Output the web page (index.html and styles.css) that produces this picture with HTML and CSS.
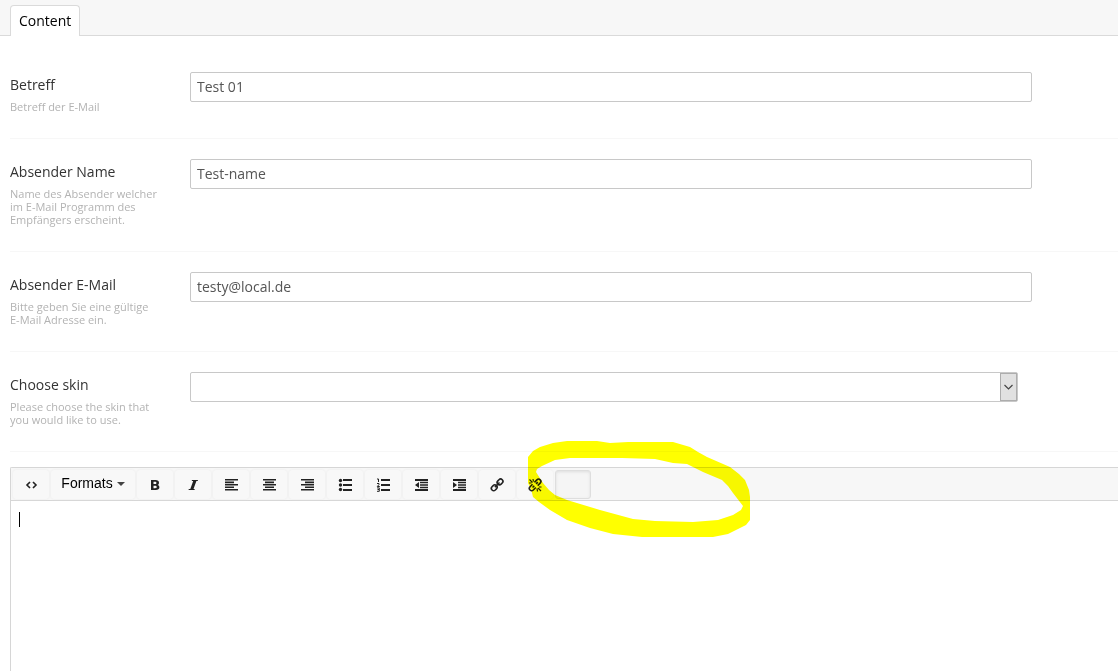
FILE: index.html
```html
<!DOCTYPE html>
<html lang="de">
<head>
    <meta charset="UTF-8">
    <meta name="viewport" content="width=device-width, initial-scale=1.0">
    <title>Content</title>
    <link rel="stylesheet" href="styles.css">
</head>
<body>
    <nav class="tabs">
        <a href="#content" class="tab active">Content</a>
    </nav>
    <form class="pane" id="content">
        <div class="row">
            <div class="control-header">
                <label for="subject">Betreff</label>
                <small>Betreff der E-Mail</small>
            </div>
            <div class="control">
                <input type="text" id="subject" value="Test 01">
            </div>
        </div>
        <div class="row">
            <div class="control-header">
                <label for="sender-name">Absender Name</label>
                <small>Name des Absender welcher im E-Mail Programm des Empfängers erscheint.</small>
            </div>
            <div class="control">
                <input type="text" id="sender-name" value="Test-name">
            </div>
        </div>
        <div class="row">
            <div class="control-header">
                <label for="sender-mail">Absender E-Mail</label>
                <small>Bitte geben Sie eine gültige E-Mail Adresse ein.</small>
            </div>
            <div class="control">
                <input type="text" id="sender-mail" value="testy@local.de">
            </div>
        </div>
        <div class="row">
            <div class="control-header">
                <label for="skin">Choose skin</label>
                <small>Please choose the skin that you would like to use.</small>
            </div>
            <div class="control">
                <div class="select">
                    <select id="skin"><option></option></select>
                    <span class="select-arrow">
                        <svg width="9" height="6" viewBox="0 0 9 6"><path d="M.5 1l4 4 4-4" fill="none" stroke="#444" stroke-width="1.2"/></svg>
                    </span>
                </div>
            </div>
        </div>

        <div class="editor">
            <div class="toolbar">
                <button type="button" aria-label="Source code">
                    <svg width="14" height="14" viewBox="0 0 14 14"><path d="M6 4L3 7l3 3M9 4l3 3-3 3" fill="none" stroke="#222" stroke-width="1.6"/></svg>
                </button>
                <button type="button" class="formats">Formats <i class="caret"></i></button>
                <button type="button" aria-label="Bold">
                    <svg width="14" height="14" viewBox="0 0 14 14"><path fill-rule="evenodd" d="M3 2h4.500c2.200 0 3.500 1 3.500 2.700 0 1.100-.6 1.900-1.500 2.200 1.200.3 1.900 1.200 1.900 2.400C11.400 11 10 12 7.800 12H3zM5.500 3.800v2.300h1.300c1.100 0 1.600-.4 1.600-1.200s-.5-1.100-1.500-1.100zM5.500 7.800v2.400h1.600c1.100 0 1.600-.4 1.600-1.200s-.6-1.200-1.700-1.200z"/></svg>
                </button>
                <button type="button" aria-label="Italic">
                    <svg width="14" height="14" viewBox="0 0 14 14"><path d="M6 2h6l-.3 1h-1.300L7.500 11h1.300l-.3 1H2.500l.3-1h1.500L7.200 3H5.700z"/></svg>
                </button>
                <button type="button" aria-label="Align left">
                    <svg width="14" height="14" viewBox="0 0 14 14"><path d="M1 1h13v1.600H1zM1 3.600h9v1.600H1zM1 6h13v1.500H1zM1 8.500h9v1.500H1zM1 11h13v1.500H1z"/></svg>
                </button>
                <button type="button" aria-label="Align center">
                    <svg width="14" height="14" viewBox="0 0 14 14"><path d="M1 1h13v1.600H1zM3 3.600h9v1.600H3zM1 6h13v1.500H1zM3 8.500h9v1.500H3zM1 11h13v1.500H1z"/></svg>
                </button>
                <button type="button" aria-label="Align right">
                    <svg width="14" height="14" viewBox="0 0 14 14"><path d="M1 1h13v1.600H1zM5 3.600h9v1.600H5zM1 6h13v1.500H1zM5 8.500h9v1.500H5zM1 11h13v1.500H1z"/></svg>
                </button>
                <button type="button" aria-label="Bullet list">
                    <svg width="14" height="14" viewBox="0 0 14 14"><circle cx="2.500" cy="2.500" r="1.700"/><circle cx="2.500" cy="7" r="1.700"/><circle cx="2.500" cy="11.500" r="1.700"/><path d="M5 1h9v2H5zM5 6h9v2H5zM5 11h9v2H5z"/></svg>
                </button>
                <button type="button" aria-label="Numbered list">
                    <svg width="14" height="14" viewBox="0 0 14 14"><path d="M5 1h9v2H5zM5 6h9v2H5zM5 11h9v2H5z"/><path d="M1 1h1.500V4M1 5.500h2v1L1.300 8.500H3.800M1 9.900h2.300v1.600H1.500M3.300 11.500V13.300H1" fill="none" stroke="#222"/></svg>
                </button>
                <button type="button" aria-label="Decrease indent">
                    <svg width="14" height="14" viewBox="0 0 14 14"><path d="M1 1h13v2H1zM6 3.700h8v1.600H6zM6 6.200h8v1.600H6zM6 8.700h8v1.600H6zM1 11h13v2H1zM5 4v6L1 7z"/></svg>
                </button>
                <button type="button" aria-label="Increase indent">
                    <svg width="14" height="14" viewBox="0 0 14 14"><path d="M1 1h13v2H1zM6 3.700h8v1.600H6zM6 6.200h8v1.600H6zM6 8.700h8v1.600H6zM1 11h13v2H1zM1 4v6l4-3z"/></svg>
                </button>
                <button type="button" aria-label="Insert link">
                    <svg width="14" height="14" viewBox="0 0 14 14"><g transform="rotate(-45 7 7)" fill="none" stroke="#222" stroke-width="1.600"><rect x="0" y="4.700" width="6.200" height="4.600" rx="2.300"/><rect x="8.200" y="4.700" width="6.200" height="4.600" rx="2.300"/><path d="M4 7h6.500"/></g></svg>
                </button>
                <button type="button" aria-label="Remove link">
                    <svg width="14" height="14" viewBox="0 0 14 14"><g fill="none" stroke="#222" stroke-width="1.600"><g transform="rotate(-45 7 7)"><path d="M5.800 4.700H2.300a2.300 2.300 0 0 0 0 4.600h3.500M8.500 4.700H12a2.300 2.300 0 0 1 0 4.600H8.500M3.500 7H6M8.500 7H11"/></g><path d="M1.500 1.500l3 3M5 1l.5 2.500M1 5h2.500M13 13l-3-3M9.500 13.500l-.5-3M13.500 9h-2.500" stroke-width="1.200"/></g></svg>
                </button>
                <button type="button" class="pressed" aria-label="Plugin"></button>
            </div>
            <div class="edit-area">
                <textarea aria-label="Editor"></textarea>
                <span class="text-cursor"></span>
            </div>
            <!-- yellow marker -->
            <svg class="marker" width="224" height="98" viewBox="0 0 224 98">
                <path fill="#ff0" fill-rule="evenodd" d="M0 17L5 11L12 7L25 3L39 1H69L82 3L100 2L145 2L162 7L170 12L179 17L202 27L211 34L217 40L221 50L222 57V80L218 85L212 88L200 94L185 97H114L85 94L62 88L39 80L22 70L11 62L5 57L3 49L0 43ZM8 32L15 43L21 50L27 55L39 60L72 70L105 79L127 81L165 82L190 80L205 75L213 70L215 66L205 53L200 46L194 40L175 32L159 24L145 23L127 19L94 18H42L27 20L14 26L9 29Z"/>
            </svg>
        </div>
    </form>
</body>
</html>
```
FILE: styles.css
```css
* {
    box-sizing: border-box;
}
body {
    margin: 0;
    min-height: 100vh;
    display: flex;
    flex-direction: column;
    font-family: 'Open Sans', 'Noto Sans', sans-serif;
    font-size: 14px;
    line-height: 20px;
    color: #333;
    background-color: #fff;
    overflow-x: hidden;
}
.tabs {
    display: flex;
    height: 36px;
    padding: 5px 10px 0;
    background-color: #f7f7f7;
    border-bottom: 1px solid #dadada;
}
.tab {
    height: 31px;
    padding: 5px 8px;
    color: #000;
    text-decoration: none;
    border: 1px solid #dadada;
    border-bottom: 0;
    border-radius: 4px 4px 0 0;
}
.tab.active {
    background-color: #fff;
}
.pane {
    flex: 1;
    display: flex;
    flex-direction: column;
    padding: 16px 0 0 10px;
}
.row {
    display: flex;
    padding: 20px 0 25px;
    border-bottom: 1px solid #f7f7f7;
}
.control-header {
    width: 180px;
    padding: 3px 30px 0 0;
}
.control-header label {
    display: block;
    margin-bottom: 5px;
}
.control-header small {
    display: block;
    font-size: 11px;
    line-height: 13px;
    color: #b3b3b3;
}
.control {
    flex: 1;
    padding-right: 86px;
}
.control input,
.control select {
    display: block;
    width: 100%;
    height: 30px;
    padding: 3px 6px 5px;
    font-family: inherit;
    font-size: 14px;
    line-height: 20px;
    color: #555;
    background-color: #fff;
    border: 1px solid #c8c8c8;
    border-radius: 2px;
}
.control select {
    appearance: none;
}
.select {
    position: relative;
    margin-right: 14px;
}
.select-arrow {
    position: absolute;
    top: 1px;
    right: 1px;
    width: 17px;
    height: 28px;
    display: flex;
    align-items: center;
    justify-content: center;
    background-color: #e1e1e1;
    border: 1px solid #adadad;
    pointer-events: none;
}

/* editor */
.editor {
    position: relative;
    flex: 1;
    display: flex;
    flex-direction: column;
    margin-top: 15px;
    border: 1px solid #d6d6d6;
    border-width: 1px 0 0 1px;
    border-radius: 2px 0 0 0;
}
.toolbar {
    display: flex;
    gap: 2px;
    padding: 2px 2px 1px;
    background-color: #f7f7f7;
    border-bottom: 1px solid #d6d6d6;
}
.toolbar button {
    display: flex;
    align-items: center;
    justify-content: center;
    width: 36px;
    height: 29px;
    padding: 0;
    font-family: 'Liberation Sans', Arial, sans-serif;
    font-size: 14px;
    color: #000;
    background-color: #f8f8f8;
    border: 0;
    border-radius: 3px;
    box-shadow: 0 0 2px #e8e8e8;
}
.toolbar button svg {
    fill: #222;
    overflow: visible;
}
.toolbar .formats {
    width: 84px;
    gap: 4px;
    padding-bottom: 3px;
}
.caret {
    margin-top: 2px;
    border: 4px solid transparent;
    border-top-color: #444;
    border-bottom: 0;
}
.toolbar .pressed {
    background-color: #f5f5f5;
    border: 1px solid #dedede;
    box-shadow: inset 0 1px 3px #ddd;
}
.edit-area {
    position: relative;
    flex: 1;
    display: flex;
}
.edit-area textarea {
    flex: 1;
    padding: 8px;
    font-family: inherit;
    font-size: 14px;
    border: 0;
    outline: 0;
    resize: none;
}
.text-cursor {
    position: absolute;
    top: 11px;
    left: 8px;
    width: 1px;
    height: 15px;
    background-color: #000;
}
.marker {
    position: absolute;
    top: -28px;
    left: 517px;
    mix-blend-mode: multiply;
    pointer-events: none;
}
```
